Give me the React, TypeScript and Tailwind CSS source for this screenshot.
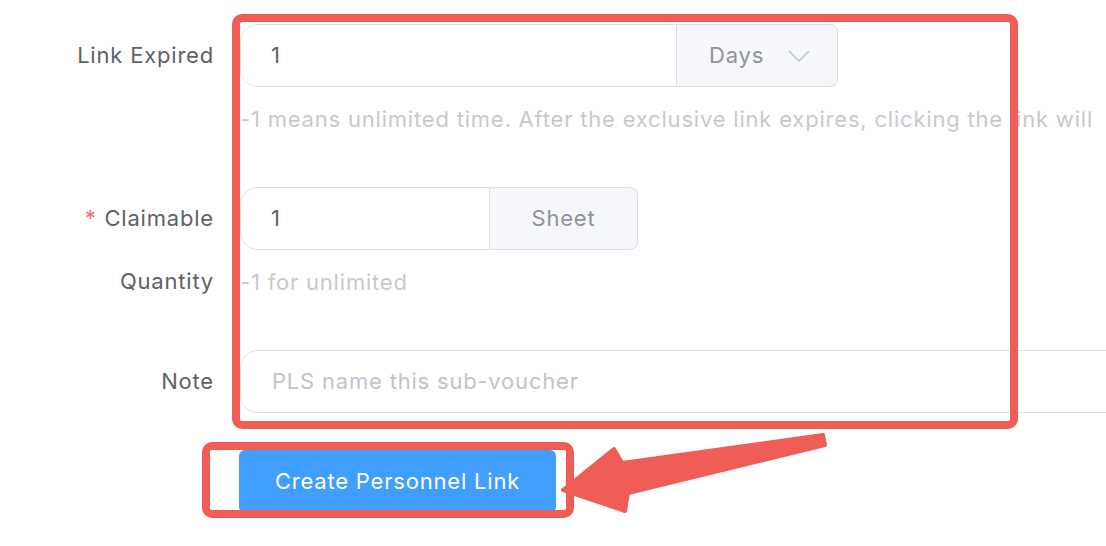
import React from 'react';

const font = { fontFamily: 'Inter, "Liberation Sans", sans-serif' };

function Label({ children }: { children: React.ReactNode }) {
	return (
		<div className="w-[240px] shrink-0 pr-[26px] text-right text-[22px] leading-[63px] tracking-[0.8px] text-[#606266]">
			{children}
		</div>
	);
}

function Hint({ children }: { children: React.ReactNode }) {
	return (
		<div className="h-[63px] pt-[16px] text-[22px] leading-[33px] tracking-[0.8px] text-[#c8c9cc] whitespace-nowrap">
			{children}
		</div>
	);
}

function Chevron() {
	return (
		<svg width="22" height="12" viewBox="0 0 22 12" fill="none">
			<path d="M1 1 L11 11 L21 1" stroke="#c0c4cc" strokeWidth="1.6" />
		</svg>
	);
}

export default function App() {
	return (
		<div
			className="relative w-[1106px] h-[546px] overflow-hidden bg-white"
			style={font}
		>
			<div className="pt-[24px]">
				{/* Link expired */}
				<div className="flex mb-[37px]">
					<Label>Link Expired</Label>
					<div className="flex flex-col">
						<div className="flex h-[63px] w-[598px]">
							<div className="flex-1 flex items-center pl-[30px] border border-[#dcdfe6] rounded-l-[18px] text-[22px] text-[#606266]">
								1
							</div>
							<div className="w-[161px] flex items-center pl-[32px] gap-[24px] bg-[#f5f7fa] border border-l-0 border-[#dcdfe6] rounded-r-[8px] text-[22px] tracking-[0.8px] text-[#909399]">
								<span>Days</span>
								<Chevron />
							</div>
						</div>
						<Hint>
							-1 means unlimited time. After the exclusive link expires, clicking the link will
						</Hint>
					</div>
				</div>

				{/* Claimable quantity */}
				<div className="flex mb-[37px]">
					<Label>
						<span className="text-[#f56c6c] mr-[8px]">*</span>Claimable
						<br />
						Quantity
					</Label>
					<div className="flex flex-col">
						<div className="flex h-[63px] w-[398px]">
							<div className="flex-1 flex items-center pl-[30px] border border-[#dcdfe6] rounded-l-[18px] text-[22px] text-[#606266]">
								1
							</div>
							<div className="w-[148px] flex items-center justify-center bg-[#f5f7fa] border border-l-0 border-[#dcdfe6] rounded-r-[8px] text-[22px] tracking-[0.8px] text-[#909399]">
								Sheet
							</div>
						</div>
						<Hint>-1 for unlimited</Hint>
					</div>
				</div>

				{/* Note */}
				<div className="flex mb-[37px]">
					<Label>Note</Label>
					<div className="h-[63px] w-[1000px] shrink-0 flex items-center pl-[31px] border border-[#dcdfe6] rounded-l-[18px] text-[22px] tracking-[0.8px] text-[#c0c4cc]">
						PLS name this sub-voucher
					</div>
				</div>

				<div className="pl-[239px]">
					<button className="w-[317px] h-[63px] bg-[#409eff] rounded-[6px] text-white text-[22px] tracking-[0.8px]">
						Create Personnel Link
					</button>
				</div>
			</div>

			{/* annotations */}
			<div className="absolute left-[232px] top-[14px] w-[786px] h-[415px] border-[8px] border-[#f05d56] rounded-[10px]" />
			<div className="absolute left-[202px] top-[442px] w-[372px] h-[76px] border-[8px] border-[#f05d56] rounded-[10px]" />
			<svg className="absolute left-0 top-0" width="1106" height="546">
				<polygon
					points="823,435 825,445 628,493 625,511 563,490 614,449 622,463"
					fill="#f05d56"
					stroke="#f05d56"
					strokeWidth="4"
					strokeLinejoin="round"
				/>
			</svg>
		</div>
	);
}
